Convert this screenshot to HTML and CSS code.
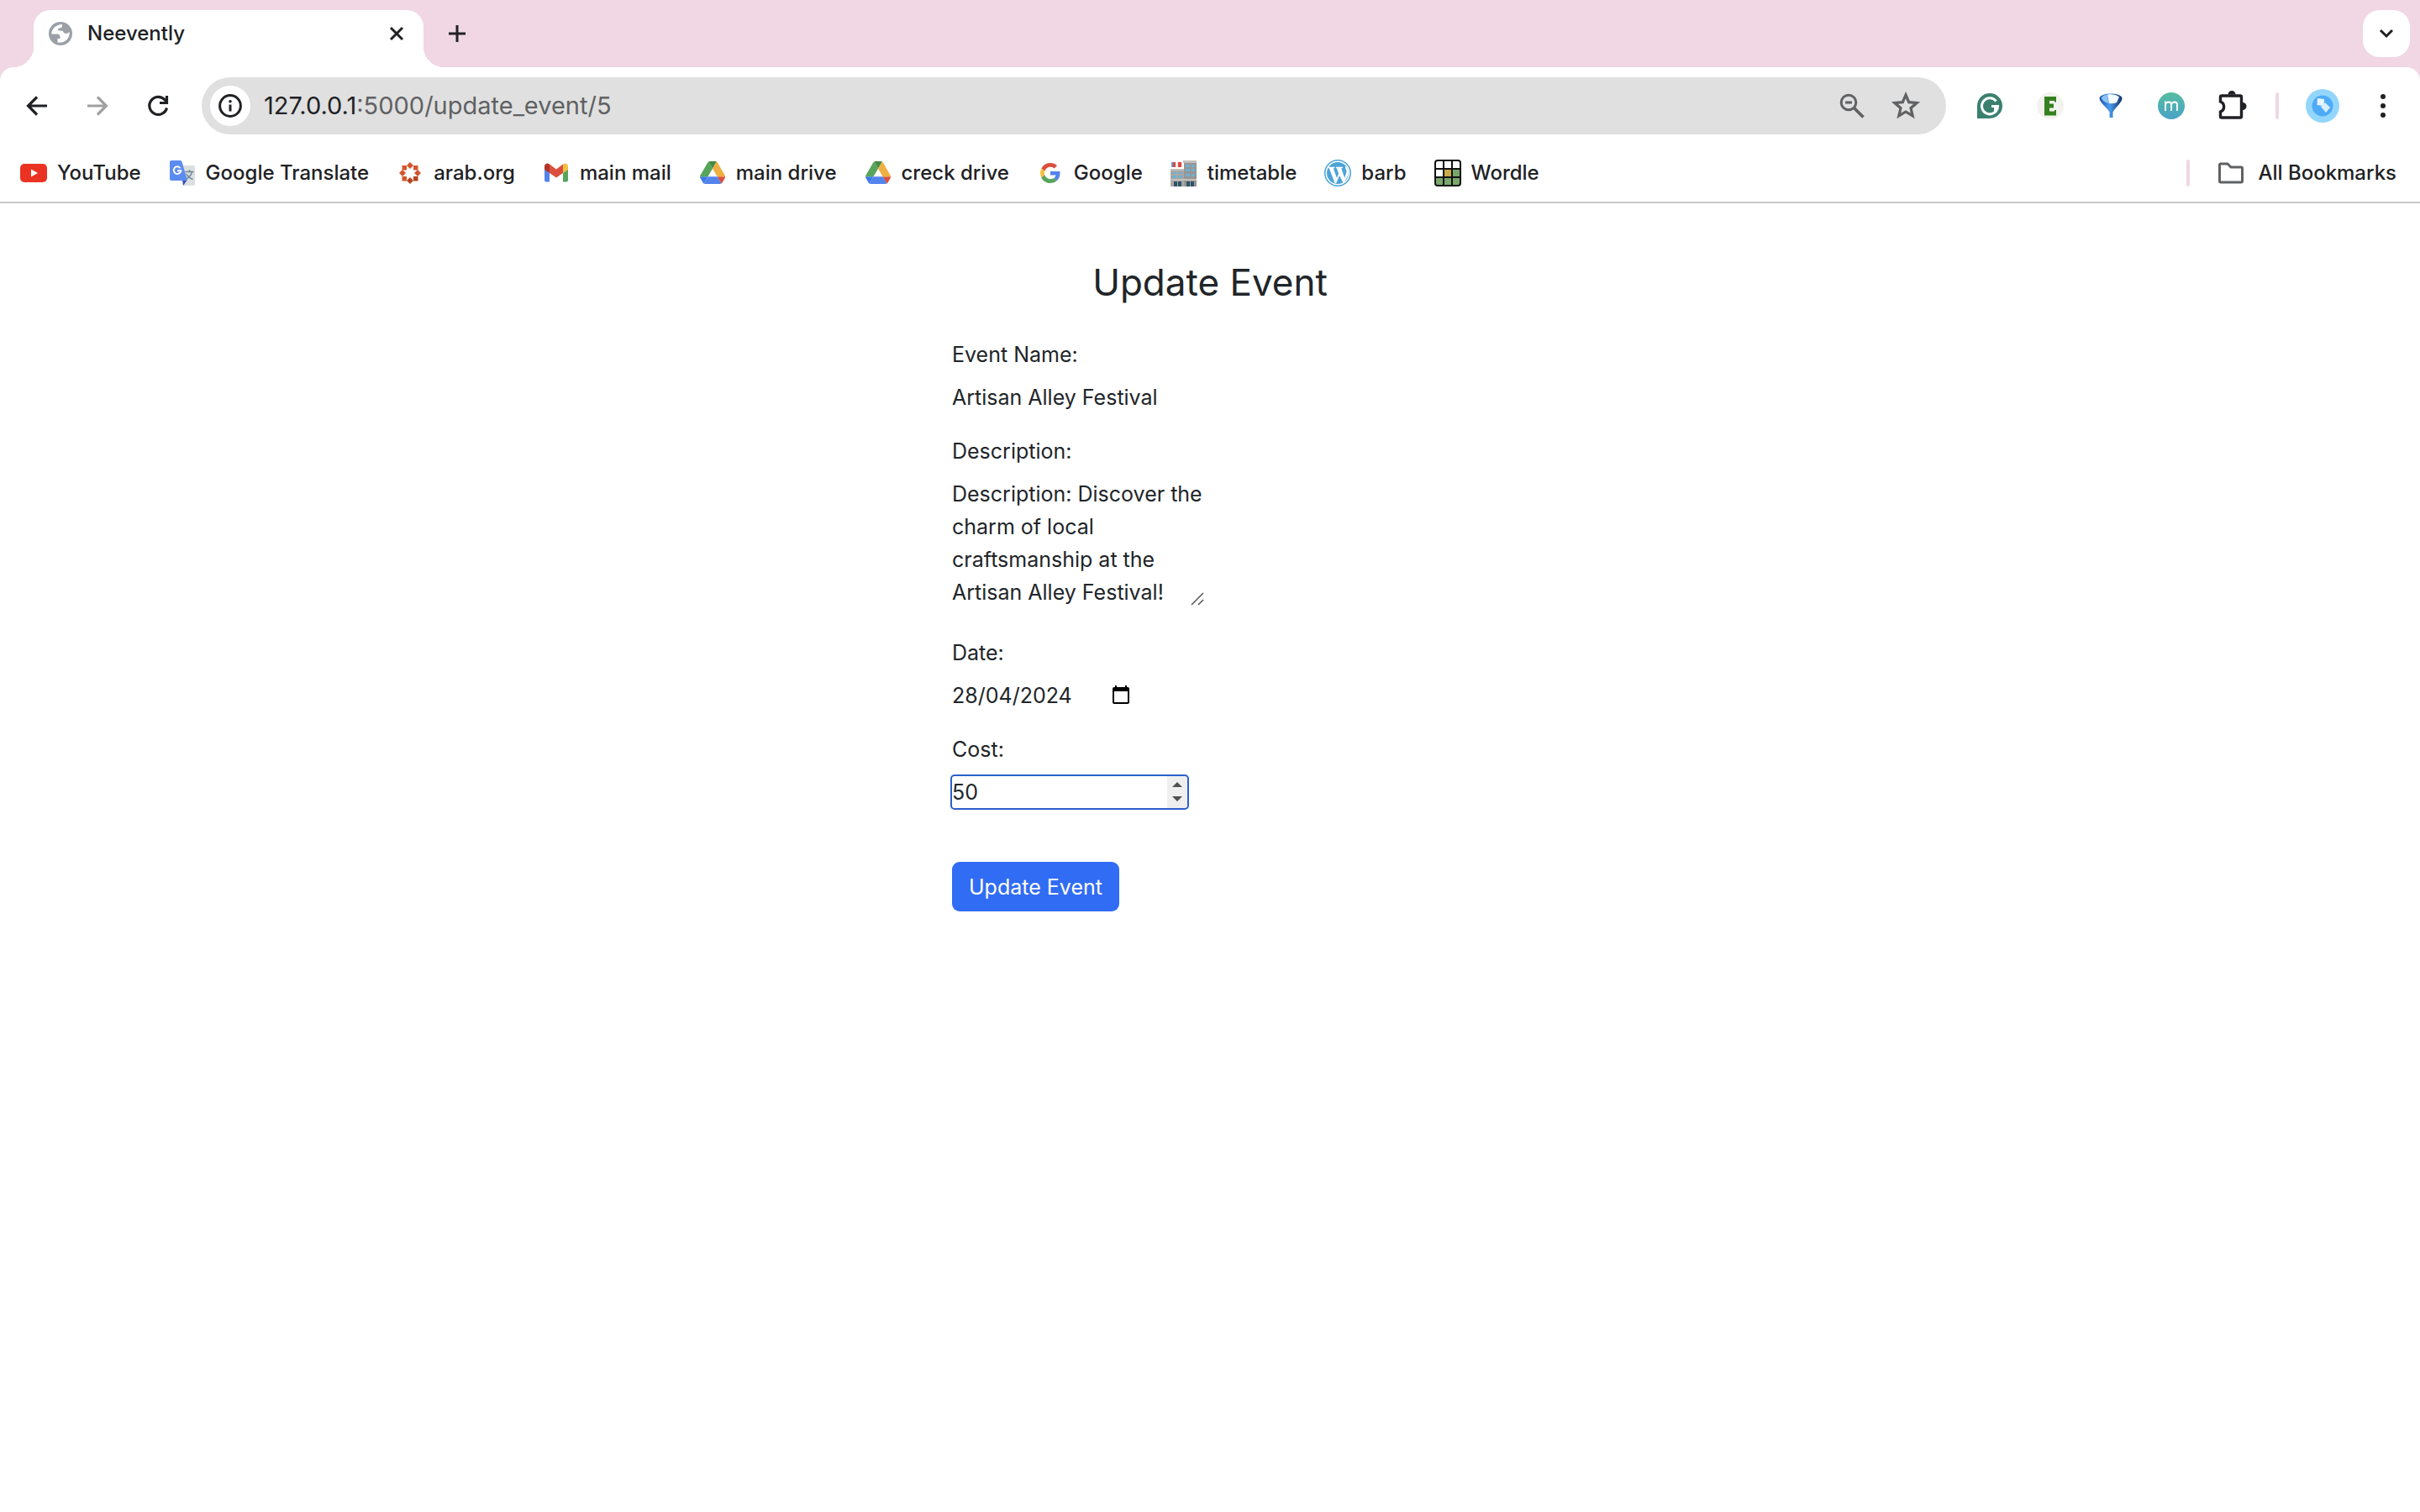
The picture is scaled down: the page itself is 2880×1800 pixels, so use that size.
FILE: index.html
```html
<!DOCTYPE html>
<html lang="en-GB">
<head>
<meta charset="utf-8">
<title>Neevently</title>
<link rel="stylesheet" href="styles.css">
</head>
<body>
<svg class="defs" aria-hidden="true">
  <symbol id="drive" viewBox="0 0 87 78">
    <path fill="#3b7ae8" d="M6.6 66.85l3.85 6.65c.8 1.4 1.95 2.5 3.3 3.3L27.5 53H0c0 1.55.4 3.1 1.2 4.5z"/>
    <path fill="#57a55c" d="M43.65 25L29.9 1.2c-1.35.8-2.5 1.9-3.3 3.3L1.2 48.5C.4 49.9 0 51.45 0 53h27.5z"/>
    <path fill="#d9503f" d="M73.55 76.8c1.35-.8 2.5-1.9 3.3-3.3l9.25-16c.8-1.4 1.2-2.95 1.2-4.5H59.8l5.85 11.5z"/>
    <path fill="#468a45" d="M43.65 25L57.4 1.2C56.05.4 54.5 0 52.9 0H34.4c-1.6 0-3.15.45-4.5 1.2z"/>
    <path fill="#5383ec" d="M59.8 53H27.5L13.75 76.8c1.35.8 2.9 1.2 4.5 1.2h50.8c1.6 0 3.15-.45 4.5-1.2z"/>
    <path fill="#efaf41" d="M73.4 26.5L60.7 4.5c-.8-1.4-1.95-2.5-3.3-3.3L43.65 25 59.8 53h27.45c0-1.55-.4-3.1-1.2-4.5z"/>
  </symbol>
</svg>

<header class="browser">
  <div class="tabstrip">
    <div class="tab">
      <svg class="i28" viewBox="0 0 28 28"><circle cx="14" cy="14" r="14" fill="#9aa0a6"/><path fill="#fff" d="M16 3C9 3 3.500 8 3.200 14.500H10q3.500 0 3.500 3.500v2h-3v4.500C19 26 25.500 19.500 24.700 12c-2 2-4.500 2.300-6.500 1.300q-.7-2.800-3.200-2.800h-2.500c-1.800 0-2.300-2.500 0-3h1.300q2.200-.3 2.200-2.500z"/></svg>
      <span class="tab-title">Neevently</span>
      <button class="plain" aria-label="Close tab"><svg class="i20" viewBox="0 0 20 20"><path d="M3 3l14 14M17 3L3 17" fill="none" stroke="#202124" stroke-width="3"/></svg></button>
    </div>
    <button class="plain" aria-label="New tab"><svg class="i20" viewBox="0 0 20 20"><path d="M10 0v20M0 10h20" stroke="#202124" stroke-width="3"/></svg></button>
    <button class="plain tab-search" aria-label="Search tabs"><svg class="i20" viewBox="0 0 20 20"><path d="M3 6l7 7 7-7" fill="none" stroke="#202124" stroke-width="3"/></svg></button>
  </div>

  <div class="toolbar">
    <nav class="nav">
      <button class="plain" aria-label="Back"><svg class="i36" viewBox="0 0 36 36"><path d="M30 18H8M18 7.500L7.500 18 18 28.500" fill="none" stroke="#202124" stroke-width="3.200"/></svg></button>
      <button class="plain" aria-label="Forward"><svg class="i36" viewBox="0 0 36 36"><path d="M6 18h22M18 7.500L28.500 18 18 28.500" fill="none" stroke="#a0a0a0" stroke-width="3.200"/></svg></button>
      <button class="plain" aria-label="Reload"><svg class="i36" viewBox="0 0 36 36"><path d="M28.500 20.500A10.500 10.500 0 1 1 26 10.700L28 13" fill="none" stroke="#202124" stroke-width="3.200"/><path d="M28.500 6v8.500H20" fill="none" stroke="#202124" stroke-width="3.200"/></svg></button>
    </nav>
    <div class="omnibox">
      <button class="plain info" aria-label="Site information"><svg class="i28" viewBox="0 0 28 28"><circle cx="14" cy="14" r="12.400" fill="none" stroke="#202124" stroke-width="3"/><path d="M14 12.500v8" stroke="#202124" stroke-width="3"/><circle cx="14" cy="8.800" r="1.800" fill="#202124"/></svg></button>
      <span class="url"><span class="host">127.0.0.1</span>:5000/update_event/5</span>
      <button class="plain" aria-label="Zoom"><svg class="i36" viewBox="0 0 36 36"><g fill="none" stroke="#5f6163" stroke-width="3"><circle cx="14" cy="14" r="8.800"/><path d="M20.500 20.500L31.500 31.500" stroke-width="3.800"/><path d="M10 14h8"/></g></svg></button>
      <button class="plain" aria-label="Bookmark this page"><svg class="i36" viewBox="0 0 36 36"><path d="M18 5l3.700 8.700 9.500.8-7.200 6.200 2.200 9.200L18 25l-8.200 4.900 2.200-9.200-7.200-6.200 9.500-.8z" fill="none" stroke="#5f6163" stroke-width="3.200"/></svg></button>
    </div>
    <div class="extensions">
      <button class="plain" aria-label="Grammarly"><svg class="i36" viewBox="0 0 36 36"><path d="M3 33V18a15 15 0 1 1 15 15z" fill="#3a8070"/><path d="M25.500 12.500A9.500 9.500 0 1 0 27.500 18.500H20M24.500 18.500v6" fill="none" stroke="#fff" stroke-width="3"/></svg></button>
      <button class="plain" aria-label="Extension E"><svg class="i36" viewBox="0 0 36 36"><circle cx="18" cy="18" r="16" fill="#f2f2ee"/><path fill="#35801f" d="M11 7h14v6.500h-2V12h-6v3.500h5v5h-5v4h6V23h2v6.500H11z"/></svg></button>
      <button class="plain" aria-label="Funnel"><svg class="i36" viewBox="0 0 36 36"><defs><linearGradient id="bl" x1="0" x2="1"><stop offset="0" stop-color="#1d54a8"/><stop offset=".45" stop-color="#4b9cf0"/><stop offset="1" stop-color="#142f66"/></linearGradient></defs><path fill="url(#bl)" d="M4.500 9C4.500 1.500 31.500 1.500 31.500 9c0 5-9 12-11 16.500V32h-4v-6.500C14.500 21 4.500 14 4.500 9z"/><path fill="#f2f9ff" d="M14 4.500c5-.6 11 .2 14 3L25 14q-4 2-9 1z"/><path fill="#8fc2f5" d="M6.500 8.500Q9 5.300 13.500 4.600L15.500 15Q9 13.500 6.500 8.500z"/></svg></button>
      <button class="plain" aria-label="Extension m"><svg class="i36" viewBox="0 0 36 36"><defs><linearGradient id="mg" x1="0" y1="0" x2="0" y2="1"><stop offset="0" stop-color="#57bd9f"/><stop offset="1" stop-color="#4aa3c8"/></linearGradient></defs><circle cx="18" cy="18" r="16" fill="url(#mg)"/><path d="M11 24v-11.500M11 16.500c1-4 7-4 7 0V24M18 16.500c1-4 7-4 7 0V24" fill="none" stroke="#fff" stroke-width="1.800"/></svg></button>
      <button class="plain" aria-label="Extensions"><svg class="i36" viewBox="0 0 36 36"><path d="M6 6h22q1.500 0 1.500 1.500v23q0 1.500-1.500 1.500H6q-1.500 0-1.500-1.500V25c5.500-2 5.500-10 0-12V7.500Q4.500 6 6 6z" fill="none" stroke="#202124" stroke-width="3.400"/><path d="M13.500 4.500a4.500 4.500 0 0 1 9 0zM31 14a4.500 4.500 0 0 1 0 9z" fill="#202124"/></svg></button>
      <span class="divider"></span>
      <button class="plain profile" aria-label="Profile"><svg class="i40" viewBox="0 0 40 40"><circle cx="20" cy="20" r="20" fill="#94d6fb"/><circle cx="20" cy="20" r="12.500" fill="#4dabf7"/><path fill="#eaf6ff" d="M14 11l8 1-.500 8-8-1z"/><path fill="#d8eefd" d="M23 16l6 6-5 6-6-7z"/></svg></button>
      <button class="plain" aria-label="Menu"><svg class="i36" viewBox="0 0 36 36"><g fill="#202124"><circle cx="18" cy="7" r="3"/><circle cx="18" cy="18" r="3"/><circle cx="18" cy="29" r="3"/></g></svg></button>
    </div>
  </div>

  <nav class="bookmarks">
    <a href="#"><svg class="i32" viewBox="0 0 32 32"><rect y="5" width="32" height="22" rx="5" fill="#ea3323"/><path fill="#fff" d="M13 11.500v9l8-4.500z"/></svg>YouTube</a>
    <a href="#"><svg class="i32" viewBox="0 0 32 32"><path fill="#dcdfe0" d="M14 7h15q2 0 2 2v20q0 2-2 2H17z"/><path d="M19.500 14.500h10M24.500 12v2.500M27.500 14.500c-1 5-4 7-7.500 9M21 17c1 3 4 5 7.500 6.500" fill="none" stroke="#6f8a94" stroke-width="1.500"/><path fill="#3a4eb8" d="M16 24h6l-5 7z"/><path fill="#5b8cf0" d="M3 1h10.500q1.500 0 2 1.500L22 25H3q-2 0-2-2V3q0-2 2-2z"/><path d="M13.600 10.200A4.300 4.300 0 1 0 14.300 13.300H10" fill="none" stroke="#fff" stroke-width="2"/></svg>Google Translate</a>
    <a href="#"><svg class="i32" viewBox="0 0 32 32"><g fill="#d2562c"><path d="M16 3l4 4-4 4-4-4zM29 16l-4 4-4-4 4-4zM3 16l4-4 4 4-4 4z"/><path d="M6.500 7H12v5.500H6.500zM20 7h5.500v5.500H20zM6.500 20H12v5.500H6.500z"/></g><g fill="#b5431f"><path d="M20 20h5.500v5.500H20zM16 21l4 4-4 4-4-4z"/></g></svg>arab.org</a>
    <a href="#"><svg class="i32" viewBox="0 0 32 32"><path fill="#5383ec" d="M2 11l6 5v10.500H4q-2 0-2-2z"/><path fill="#57a55c" d="M24 16l6-5v13.500q0 2-2 2h-4z"/><path fill="#b3352a" d="M2 12V8c0-3 3.400-4.400 5.500-2.800L8 5.600V16z"/><path fill="#f2c044" d="M30 12V8c0-3-3.400-4.400-5.500-2.800L24 5.600V16z"/><path fill="#d9503f" d="M8 5.500l8 6 8-6V16l-8 5.500L8 16z"/></svg>main mail</a>
    <a href="#"><svg class="i32" viewBox="0 0 32 32"><use href="#drive" x="1" y="2" width="30" height="27"/></svg>main drive</a>
    <a href="#"><svg class="i32" viewBox="0 0 32 32"><use href="#drive" x="1" y="2" width="30" height="27"/></svg>creck drive</a>
    <a href="#"><svg class="i32" viewBox="-8 -8 64 64"><path fill="#d9503f" d="M24 9.500c3.540 0 6.710 1.220 9.210 3.600l6.850-6.850C35.900 2.380 30.470 0 24 0 14.620 0 6.510 5.380 2.560 13.220l7.980 6.190C12.430 13.720 17.740 9.500 24 9.500z"/><path fill="#5383ec" d="M46.980 24.550c0-1.570-.15-3.090-.38-4.550H24v9.020h12.940c-.58 2.960-2.260 5.480-4.780 7.180l7.730 6c4.510-4.180 7.090-10.360 7.090-17.650z"/><path fill="#f2c044" d="M10.530 28.590c-.48-1.450-.76-2.990-.76-4.590s.27-3.140.76-4.590l-7.980-6.190C.92 16.460 0 20.120 0 24s.92 7.540 2.560 10.780z"/><path fill="#57a55c" d="M24 48c6.480 0 11.930-2.130 15.890-5.810l-7.730-6c-2.150 1.450-4.920 2.300-8.160 2.300-6.260 0-11.570-4.220-13.470-9.910l-7.980 6.190C6.510 42.620 14.620 48 24 48z"/></svg>Google</a>
    <a href="#"><svg class="i32" viewBox="0 0 32 32"><path fill="#aaa7a5" d="M0 12h17v20H0z"/><path fill="#979595" d="M16 3h15v29H16z"/><path fill="#c4bfb9" d="M15 1h16v3H15zM0 11h16v2H0zM0 23h31v2H0z"/><path fill="#e8edf0" d="M1 3h13v6H1z"/><path fill="#e3453b" d="M3 3h3v6H3zM9 3h4v6H9z"/><path fill="#5aa0dd" d="M1 3h2v6H1z"/><path fill="#6fb0d2" d="M2 15h5v2H2zM9 15h5v2H9zM2 19h5v3H2zM9 19h5v3H9zM18 6h5v3h-5zM25 6h4v3h-4zM18 11h5v3h-5zM25 11h4v3h-4zM18 17h5v3h-5zM25 17h4v3h-4z"/><path fill="#2e5468" d="M4 26h4v6H4zM9 26h4v6H9zM19 26h4v6h-4zM24 26h4v6h-4z"/></svg>timetable</a>
    <a href="#"><svg class="i32" viewBox="0 0 32 32"><circle cx="16" cy="16" r="16" fill="#4ba3d8"/><circle cx="16" cy="16" r="13.700" fill="none" stroke="#fff" stroke-width="1.500"/><path d="M4.500 9.500h8M14 9.500h8" stroke="#fff" stroke-width="1.400"/><path fill="#fff" d="M5.500 9.500h5L15 22l2-5.500-2.500-7H20L24.200 22l2-6.500c1-3.500-2-4.500-1-8 3.500 3 4.500 7 3 11.500L23 28.500 18 19l-4 9.500L12.500 28z"/></svg>barb</a>
    <a href="#"><svg class="i32" viewBox="0 0 32 32"><rect x="1" y="1" width="30" height="30" rx="3" fill="#fff"/><path fill="#c9aa4c" d="M11 11h10v10H11z"/><path fill="#79a76b" d="M21 11h10v10H21zM1 21h30v8q0 2-2 2H3q-2 0-2-2z"/><path d="M11 1v30M21 1v30M1 11h30M1 21h30" stroke="#121213" stroke-width="2"/><rect x="1" y="1" width="30" height="30" rx="3" fill="none" stroke="#121213" stroke-width="2"/></svg>Wordle</a>
    <span class="divider all-divider"></span>
    <a href="#"><svg class="i32" viewBox="0 0 32 32"><path d="M3 5h9l4 4h12q1.500 0 1.500 1.500v15q0 1.500-1.500 1.500H4q-1.500 0-1.500-1.500V6.500Q2.500 5 4 5z" fill="none" stroke="#5f6163" stroke-width="3"/></svg><span class="all-label">All Bookmarks</span></a>
  </nav>
</header>

<main class="page">
  <h2>Update Event</h2>
  <form>
    <div class="field">
      <label for="name">Event Name:</label>
      <input id="name" type="text" value="Artisan Alley Festival">
    </div>
    <div class="field">
      <label for="description">Description:</label>
      <div class="area">
        <textarea id="description" rows="4">Description: Discover the charm of local craftsmanship at the Artisan Alley Festival!</textarea>
        <svg class="grip" viewBox="0 0 16 16"><path d="M1 15L15 1M9 15l6-6" stroke="#555" stroke-width="1.500"/></svg>
      </div>
    </div>
    <div class="field">
      <label for="date">Date:</label>
      <div class="date">
        <input id="date" type="text" value="28/04/2024">
        <button type="button" class="plain" aria-label="Show date picker"><svg class="i24" viewBox="0 0 24 24"><path fill="#000" fill-rule="evenodd" d="M5 0h2v2h10V0h2v2h1q2 0 2 2v16q0 2-2 2H4q-2 0-2-2V4q0-2 2-2h1zM4 7v13h16V7z"/></svg></button>
      </div>
    </div>
    <div class="field">
      <label for="cost">Cost:</label>
      <div class="cost">
        <input id="cost" type="number" value="50">
        <span class="spin"><svg viewBox="0 0 24 38"><path fill="#505050" d="M6 13l6-6 6 6zM6 24l6 6 6-6z"/></svg></span>
      </div>
    </div>
    <button class="submit" type="submit">Update Event</button>
  </form>
</main>
</body>
</html>
```

FILE: styles.css
```css
* { box-sizing: border-box; }

body {
  margin: 0;
  background: #fff;
  color: #212529;
  font: 25px/38px Inter, "Liberation Sans", sans-serif;
}

svg { display: block; flex: none; }
.defs { position: absolute; width: 0; height: 0; }
.i20 { width: 20px; height: 20px; }
.i24 { width: 24px; height: 24px; }
.i28 { width: 28px; height: 28px; }
.i32 { width: 32px; height: 32px; }
.i36 { width: 36px; height: 36px; }
.i40 { width: 40px; height: 40px; }

.plain {
  display: flex;
  align-items: center;
  justify-content: center;
  flex: none;
  padding: 0;
  border: 0;
  background: none;
}

/* Browser chrome */
.browser {
  background: #f0d7e3;
  color: #202124;
}

.tabstrip {
  display: flex;
  align-items: center;
  height: 80px;
  padding: 0 12px 0 40px;
}

.tab {
  position: relative;
  display: flex;
  align-items: center;
  align-self: flex-end;
  width: 464px;
  height: 68px;
  margin-right: 30px;
  padding: 0 22px 12px 18px;
  border-radius: 20px 20px 0 0;
  background: #fff;
}

.tab::before,
.tab::after {
  content: "";
  position: absolute;
  bottom: 0;
  width: 24px;
  height: 24px;
}
.tab::before {
  right: 100%;
  background: radial-gradient(circle at 0 0, transparent 24px, #fff 24px);
}
.tab::after {
  left: 100%;
  background: radial-gradient(circle at 100% 0, transparent 24px, #fff 24px);
}

.tab-title {
  flex: 1;
  padding-left: 18px;
  font-size: 24px;
  font-weight: 500;
}

.tab-search {
  width: 56px;
  height: 56px;
  margin-left: auto;
  border-radius: 20px;
  background: #fff;
}

.toolbar {
  display: flex;
  align-items: center;
  height: 92px;
  padding: 0 26px;
  border-radius: 16px 16px 0 0;
  background: #fff;
}

.nav {
  display: flex;
  gap: 36px;
  margin-right: 34px;
}

.omnibox {
  display: flex;
  flex: 1;
  align-items: center;
  gap: 28px;
  height: 68px;
  padding: 0 30px 0 10px;
  border-radius: 34px;
  background: #e0e0e0;
}

.info {
  width: 48px;
  height: 48px;
  border-radius: 50%;
  background: #fff;
}

.url {
  flex: 1;
  margin-left: -12px;
  color: #5f6163;
  font-size: 29px;
}
.host { color: #202124; }

.extensions {
  display: flex;
  align-items: center;
  gap: 36px;
  margin-left: 34px;
}
.extensions .divider,
.profile { margin: 0 -2px; }

.divider {
  width: 4px;
  height: 32px;
  border-radius: 2px;
  background: #f0d7e3;
}

.bookmarks {
  display: flex;
  align-items: center;
  gap: 33px;
  height: 70px;
  padding: 0 28px 0 24px;
  border-bottom: 2px solid #c8c8c8;
  background: #fff;
  font-size: 24px;
  font-weight: 500;
}
.bookmarks a {
  display: flex;
  align-items: center;
  gap: 12px;
  color: #202124;
  text-decoration: none;
  white-space: nowrap;
}
.all-divider { margin-left: auto; }
.all-label { padding-left: 4px; }

/* Update form */
.page {
  max-width: 614px;
  margin: 0 auto;
  padding-top: 64px;
}

h2 {
  margin: 0 0 36px;
  font-size: 44px;
  font-weight: 400;
  line-height: 61px;
  text-align: center;
}

form {
  display: flex;
  flex-direction: column;
  align-items: flex-start;
}

.field {
  display: flex;
  flex-direction: column;
  gap: 13px;
  margin-bottom: 26px;
}

input,
textarea {
  display: block;
  margin: 0;
  padding: 0;
  border: 0;
  background: none;
  color: inherit;
  font: inherit;
}
input { width: 280px; height: 38px; }

.area {
  position: relative;
  width: 300px;
  margin-bottom: 7px;
}
textarea {
  width: 100%;
  height: 156px;
  line-height: 39px;
  overflow: hidden;
  resize: none;
}
.grip {
  position: absolute;
  right: 0;
  bottom: 4px;
  width: 16px;
  height: 16px;
}

.date {
  display: flex;
  align-items: center;
}
.date input { width: 189px; }

.cost {
  display: flex;
  width: 280px;
  border-radius: 3px;
  outline: 2px solid #2b60cc;
}
.cost input {
  flex: 1;
  width: 0;
  outline: 0;
  appearance: textfield;
}
.cost input::-webkit-inner-spin-button { display: none; }
.spin {
  width: 24px;
  height: 38px;
  background: #efefef;
}

.submit {
  height: 59px;
  margin-top: 38px;
  padding: 0 20px;
  border: 0;
  border-radius: 9px;
  background: #316cf4;
  color: #fff;
  font: inherit;
}
```
